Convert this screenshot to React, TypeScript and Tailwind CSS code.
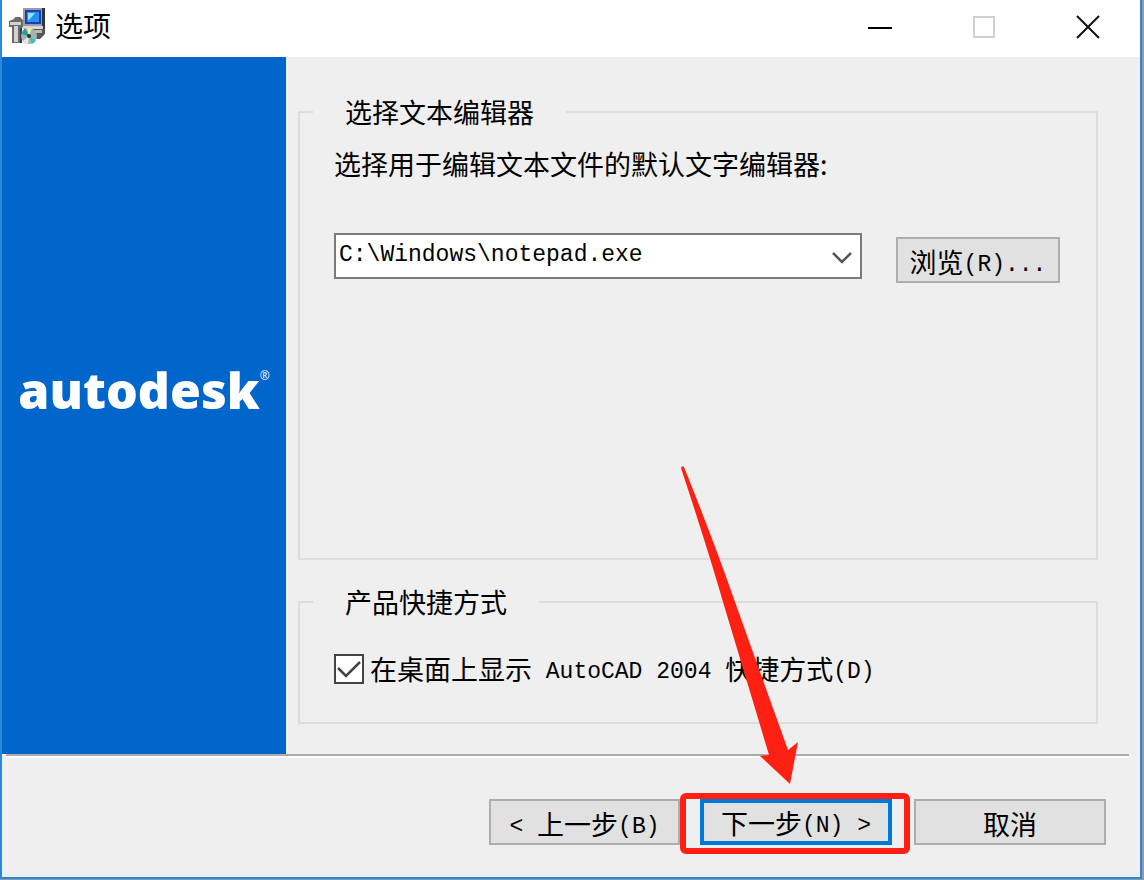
import { useState } from 'react';

const buttonClass =
  'h-[46px] border-2 border-[#adadad] bg-[#e1e1e1] pt-1 whitespace-nowrap text-black';

// 英文和数字使用等宽字体
function Mono({ children }: { children: React.ReactNode }) {
  return (
    <span className="align-[2px] leading-none whitespace-pre font-['Liberation_Mono','Noto_Sans_CJK_SC',monospace] text-[23px]">
      {children}
    </span>
  );
}

// 安装程序图标
function SetupIcon() {
  return (
    <svg width="38" height="38" viewBox="0 0 38 38" aria-hidden="true">
      <path d="M14 0h22v21H14z" fill="#9c9ca4" />
      <path d="M33 0h3v22h-3z" fill="#33333b" />
      <path d="M14 18h20v3H14z" fill="#d6d6d6" />
      <path d="M16 2h16v14H16z" fill="#1740b4" />
      <path d="M18 4h12v10H18z" fill="#2b8ff0" />
      <path d="M19 5h7l-6 7h-1z" fill="#8ee4fb" />
      <path d="M15 21h21v5l-5 5h-6l-4-6h-6z" fill="#55555a" />
      <path d="M18 22h15v3H18z" fill="#b9b9b9" />
      <path d="M0 13l5-2 1-2h5l3 3v7l-1 1v15H3V19H0z" fill="#6b6b6b" />
      <path d="M1 14h11v3H1zM5 18h4v16H5z" fill="#d2d2d2" />
      <path d="M11 20h2v15h-2z" fill="#38383a" />
      <circle cx="20" cy="28" r="8" fill="#a9b0b0" />
      <path d="M20 28l-8-2 4-6z" fill="#18a2a4" />
      <path d="M20 28l-2-8h5z" fill="#f3ed9c" />
      <path d="M20 28l7 5-4 3z" fill="#27c4c2" />
      <path d="M20 28l-1 8-5-3z" fill="#e6efdc" />
      <circle cx="20" cy="28" r="2" fill="#333" />
    </svg>
  );
}

function TitleBar() {
  return (
    <header className="flex h-[57px] shrink-0 items-center bg-white pr-10 pb-1 pl-[7px]">
      <SetupIcon />
      <h1 className="ml-2 flex-1 pb-1 text-[28px] leading-8">选项</h1>
      <div className="flex gap-20">
        <button type="button" aria-label="最小化">
          <svg width="24" height="24" viewBox="0 0 24 24">
            <path d="M0 13h24" stroke="#000" strokeWidth="2" />
          </svg>
        </button>
        <button type="button" aria-label="最大化" disabled>
          <svg width="24" height="24" viewBox="0 0 24 24" fill="none">
            <path d="M2 2h20v20H2z" stroke="#d0d0d0" strokeWidth="2" />
          </svg>
        </button>
        <button type="button" aria-label="关闭">
          <svg width="24" height="24" viewBox="0 0 24 24">
            <path d="M1 1l22 22M23 1L1 23" stroke="#111" strokeWidth="2" />
          </svg>
        </button>
      </div>
    </header>
  );
}

export default function App() {
  const [editor, setEditor] = useState('C:\\Windows\\notepad.exe');
  const [shortcut, setShortcut] = useState(true);

  return (
    <div className="flex min-h-screen bg-[#999] pr-[2px] pb-px font-['Noto_Sans_CJK_SC',sans-serif] text-[27px] leading-9 text-black">
      <div className="flex flex-1 flex-col border-x-2 border-b-2 border-[#2a8ad8] bg-[#efefef]">
        <TitleBar />

        <main className="flex flex-1">
          <aside className="flex w-[284px] shrink-0 items-center justify-center bg-[#0066cc] text-white">
            <p className="flex items-start pb-8 font-['Open_Sans',sans-serif] text-[50px] leading-[60px] font-extrabold">
              autodesk
              <span className="text-[12px] leading-8 font-normal">®</span>
            </p>
          </aside>

          <div className="flex flex-1 flex-col gap-6 pt-[37px] pr-[42px] pb-[30px] pl-3">
            <fieldset className="min-w-0 flex-1 border-2 border-[#dcdcdc] px-[13px]">
              <legend className="px-8">选择文本编辑器</legend>
              <div className="pt-4 pr-[23px] pl-[21px]">
                <label htmlFor="editor" className="block">
                  选择用于编辑文本文件的默认文字编辑器:
                </label>
                <div className="mt-[51px] flex items-start gap-[34px]">
                  <div className="relative flex-1">
                    <select
                      id="editor"
                      value={editor}
                      onChange={(e) => setEditor(e.target.value)}
                      className="block h-[46px] w-full appearance-none border-2 border-[#7a7a7a] bg-white pb-[2px] pl-[3px] font-['Liberation_Mono',monospace] text-[23px]"
                    >
                      <option>C:\Windows\notepad.exe</option>
                    </select>
                    <svg
                      className="pointer-events-none absolute top-[18px] right-[10px]"
                      width="20"
                      height="14"
                      viewBox="0 0 20 14"
                      fill="none"
                    >
                      <path d="M1 2l9 9 9-9" stroke="#555" strokeWidth="2.5" />
                    </svg>
                  </div>
                  <button type="button" className={`${buttonClass} mt-1 w-[164px]`}>
                    浏览<Mono>(R)...</Mono>
                  </button>
                </div>
              </div>
            </fieldset>

            <fieldset className="min-w-0 border-2 border-[#dcdcdc] px-[13px]">
              <legend className="px-8">产品快捷方式</legend>
              <label className="flex items-center pt-[31px] pb-[35px] pl-[21px]">
                <span className="relative mr-[6px] size-[30px]">
                  <input
                    type="checkbox"
                    checked={shortcut}
                    onChange={(e) => setShortcut(e.target.checked)}
                    className="block size-[30px] appearance-none border-2 border-[#444] bg-white"
                  />
                  {shortcut && (
                    <svg
                      className="pointer-events-none absolute inset-0"
                      width="30"
                      height="30"
                      viewBox="0 0 30 30"
                      fill="none"
                    >
                      <path d="M4 14l8 8L26 8" stroke="#444" strokeWidth="2.5" />
                    </svg>
                  )}
                </span>
                <span className="whitespace-nowrap">
                  在桌面上显示<Mono> AutoCAD 2004 </Mono>快捷方式<Mono>(D)</Mono>
                </span>
              </label>
            </fieldset>
          </div>
        </main>

        <footer>
          <hr className="mr-[11px] ml-1 h-1 border-t-2 border-b-2 border-t-[#acacac] border-b-white" />
          <div className="flex justify-end pt-[41px] pr-[34px] pb-8">
            <button type="button" className={`${buttonClass} w-[191px]`}>
              <Mono>&lt; </Mono>上一步<Mono>(B)</Mono>
            </button>
            <div className="relative mr-[22px] ml-5">
              <button
                type="button"
                className="h-[46px] w-[192px] border-4 border-[#0078d7] bg-[#e1e1e1] pt-[2px] whitespace-nowrap"
              >
                下一步<Mono>(N) &gt;</Mono>
              </button>
              {/* 红色标注框和箭头 */}
              <div className="pointer-events-none absolute -top-[6px] -right-[18px] -bottom-[9px] -left-5 rounded-md border-[6px] border-[#ff2014]" />
              <svg
                className="pointer-events-none absolute bottom-[60px] -left-5"
                width="120"
                height="320"
                viewBox="0 0 120 320"
                aria-hidden="true"
              >
                <path
                  d="M1 3Q2 0 4 2Q33 74 55 137L108 285L118 277L110 319L80 291L89 290L43 137Q28 85 1 3Z"
                  fill="#ff2014"
                />
              </svg>
            </div>
            <button type="button" className={`${buttonClass} w-[192px]`}>
              取消
            </button>
          </div>
        </footer>
      </div>
    </div>
  );
}
